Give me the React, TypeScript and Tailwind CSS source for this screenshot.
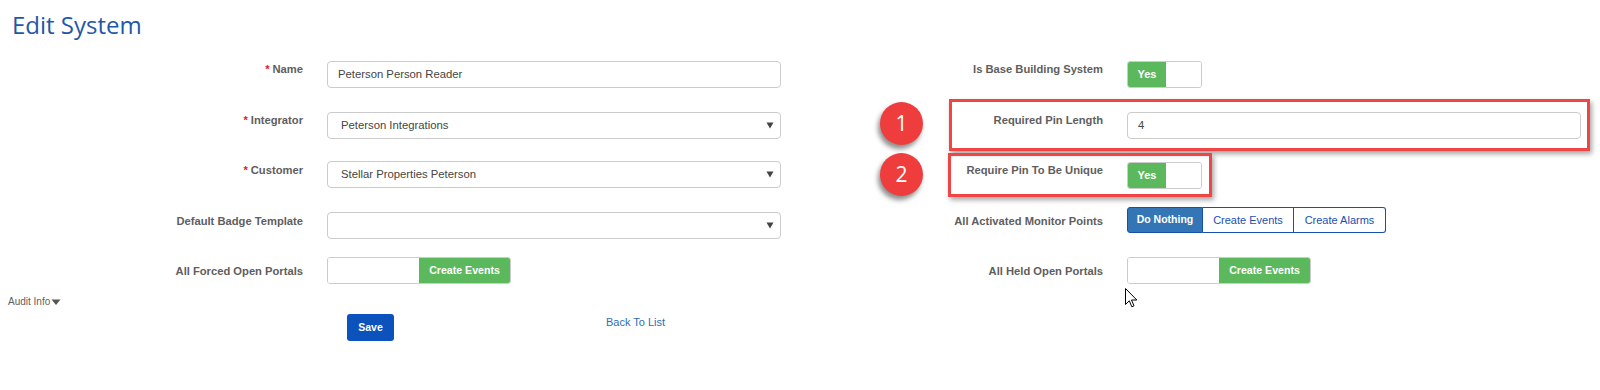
import React from "react";

const Label = ({ children, req, pt }: { children: React.ReactNode; req?: boolean; pt: string }) => (
  <div className={`w-[303px] shrink-0 text-right text-[11.2px] leading-[16px] font-bold text-[#5e5e5e] ${pt}`}>
    {req && <span className="text-[#e02020] mr-[3px]">*</span>}
    {children}
  </div>
);

const Row = ({ mt, label, req, pt, children }: { mt: string; label: string; req?: boolean; pt: string; children: React.ReactNode }) => (
  <div className={`flex items-start ${mt}`}>
    <Label req={req} pt={pt}>{label}</Label>
    <div className="ml-[24px]">{children}</div>
  </div>
);

const TextInput = ({ value }: { value: string }) => (
  <div className="w-[454px] h-[27px] border border-[#ccc] rounded-[4px] pl-[10px] flex items-center text-[11.3px] text-[#444]">
    {value}
  </div>
);

const Select = ({ value }: { value: string }) => (
  <div className="w-[454px] h-[27px] border border-[#ccc] rounded-[4px] pl-[13px] pr-[6px] flex items-center justify-between text-[11.3px] text-[#444]">
    <span>{value}</span>
    <svg width="8" height="7" viewBox="0 0 8 7">
      <path d="M0.5 0.5 H7.5 L4 6.5 Z" fill="#444" />
    </svg>
  </div>
);

const YesToggle = () => (
  <div className="w-[75px] h-[27px] border border-[#ccc] rounded-[3px] flex overflow-hidden">
    <div className="w-[38px] h-full bg-[#5cb85c] text-white font-bold text-[11px] flex items-center justify-center">Yes</div>
    <div className="flex-1 bg-white" />
  </div>
);

const EventsToggle = () => (
  <div className="w-[184px] h-[27px] border border-[#ccc] rounded-[3px] flex overflow-hidden">
    <div className="w-[91px] h-full bg-white" />
    <div className="flex-1 h-full bg-[#5cb85c] text-white font-bold text-[10.6px] flex items-center justify-center">Create Events</div>
  </div>
);

export default function App() {
  return (
    <div className="relative w-[1600px] h-[390px] overflow-hidden bg-white font-['Liberation_Sans',Arial,sans-serif]">
      <h1 className="pt-[11px] pl-[12px] text-[24px] leading-[28px] font-normal text-[#1f58a8] font-['Open_Sans',sans-serif]">
        Edit System
      </h1>

      <div className="grid grid-cols-[800px_800px] mt-[22px]">
        <div className="flex flex-col">
          <Row mt="mt-0" label="Name" req pt="pt-0">
            <TextInput value="Peterson Person Reader" />
          </Row>
          <Row mt="mt-[24px]" label="Integrator" req pt="pt-0">
            <Select value="Peterson Integrations" />
          </Row>
          <Row mt="mt-[22px]" label="Customer" req pt="pt-[1px]">
            <Select value="Stellar Properties Peterson" />
          </Row>
          <Row mt="mt-[24px]" label="Default Badge Template" pt="pt-[1px]">
            <Select value="" />
          </Row>
          <Row mt="mt-[18px]" label="All Forced Open Portals" pt="pt-[6px]">
            <EventsToggle />
          </Row>
        </div>

        <div className="flex flex-col">
          <Row mt="mt-0" label="Is Base Building System" pt="pt-0">
            <YesToggle />
          </Row>
          <Row mt="mt-[24px]" label="Required Pin Length" pt="pt-0">
            <TextInput value="4" />
          </Row>
          <Row mt="mt-[23px]" label="Require Pin To Be Unique" pt="pt-0">
            <YesToggle />
          </Row>
          <Row mt="mt-[18px]" label="All Activated Monitor Points" pt="pt-[6px]">
            <div className="flex h-[26px] text-[11px]">
              <div className="w-[76px] h-full bg-[#3476b5] border border-[#1450b0] rounded-l-[3px] text-white font-bold text-[10.5px] flex items-center justify-center">
                Do Nothing
              </div>
              <div className="w-[91px] h-full border-y border-r border-[#1450b0] text-[#1a4fb0] flex items-center justify-center">
                Create Events
              </div>
              <div className="w-[92px] h-full border-y border-r border-[#1450b0] rounded-r-[3px] text-[#1a4fb0] flex items-center justify-center">
                Create Alarms
              </div>
            </div>
          </Row>
          <Row mt="mt-[24px]" label="All Held Open Portals" pt="pt-[6px]">
            <EventsToggle />
          </Row>
        </div>
      </div>

      <div className="mt-[11px] pl-[8px] flex items-center text-[10px] leading-[14px] text-[#606060]">
        <span>Audit Info</span>
        <svg className="ml-[1px]" width="10" height="7" viewBox="0 0 10 7">
          <path d="M0.5 0.5 H9.5 L5 6 Z" fill="#555" />
        </svg>
      </div>

      <div className="mt-[5px] flex items-start">
        <div className="ml-[347px] w-[47px] h-[27px] bg-[#0b52bd] rounded-[3px] text-white font-bold text-[10.5px] flex items-center justify-center">
          Save
        </div>
        <div className="ml-[212px] mt-[1px] text-[11px] leading-[14px] text-[#2f6db5]">Back To List</div>
      </div>

      {/* annotations */}
      <div className="absolute left-[949px] top-[99px] w-[641px] h-[52px] border-[3px] border-[#f04545] shadow-[2px_3px_5px_rgba(0,0,0,0.35)]" />
      <div className="absolute left-[948px] top-[153px] w-[264px] h-[44px] border-[3px] border-[#f04545] shadow-[2px_3px_5px_rgba(0,0,0,0.35)]" />

      <div className="absolute left-[880px] top-[102px] w-[43px] h-[43px] rounded-full bg-[#ef3d3d] shadow-[-2px_4px_5px_rgba(0,0,0,0.45)] flex items-center justify-center text-white text-[21px] font-['Open_Sans',sans-serif]">
        1
      </div>
      <div className="absolute left-[880px] top-[153px] w-[43px] h-[43px] rounded-full bg-[#ef3d3d] shadow-[-2px_4px_5px_rgba(0,0,0,0.45)] flex items-center justify-center text-white text-[21px] font-['Open_Sans',sans-serif]">
        2
      </div>

      <svg className="absolute left-[1125px] top-[288px]" width="13" height="20" viewBox="0 0 13 20">
        <path d="M0.5 0.5 L0.5 16.5 L4.3 12.8 L6.8 18.8 L9 17.8 L6.5 12 L11.8 12 Z" fill="#fff" stroke="#000" strokeWidth="1" strokeLinejoin="miter" />
      </svg>
    </div>
  );
}
